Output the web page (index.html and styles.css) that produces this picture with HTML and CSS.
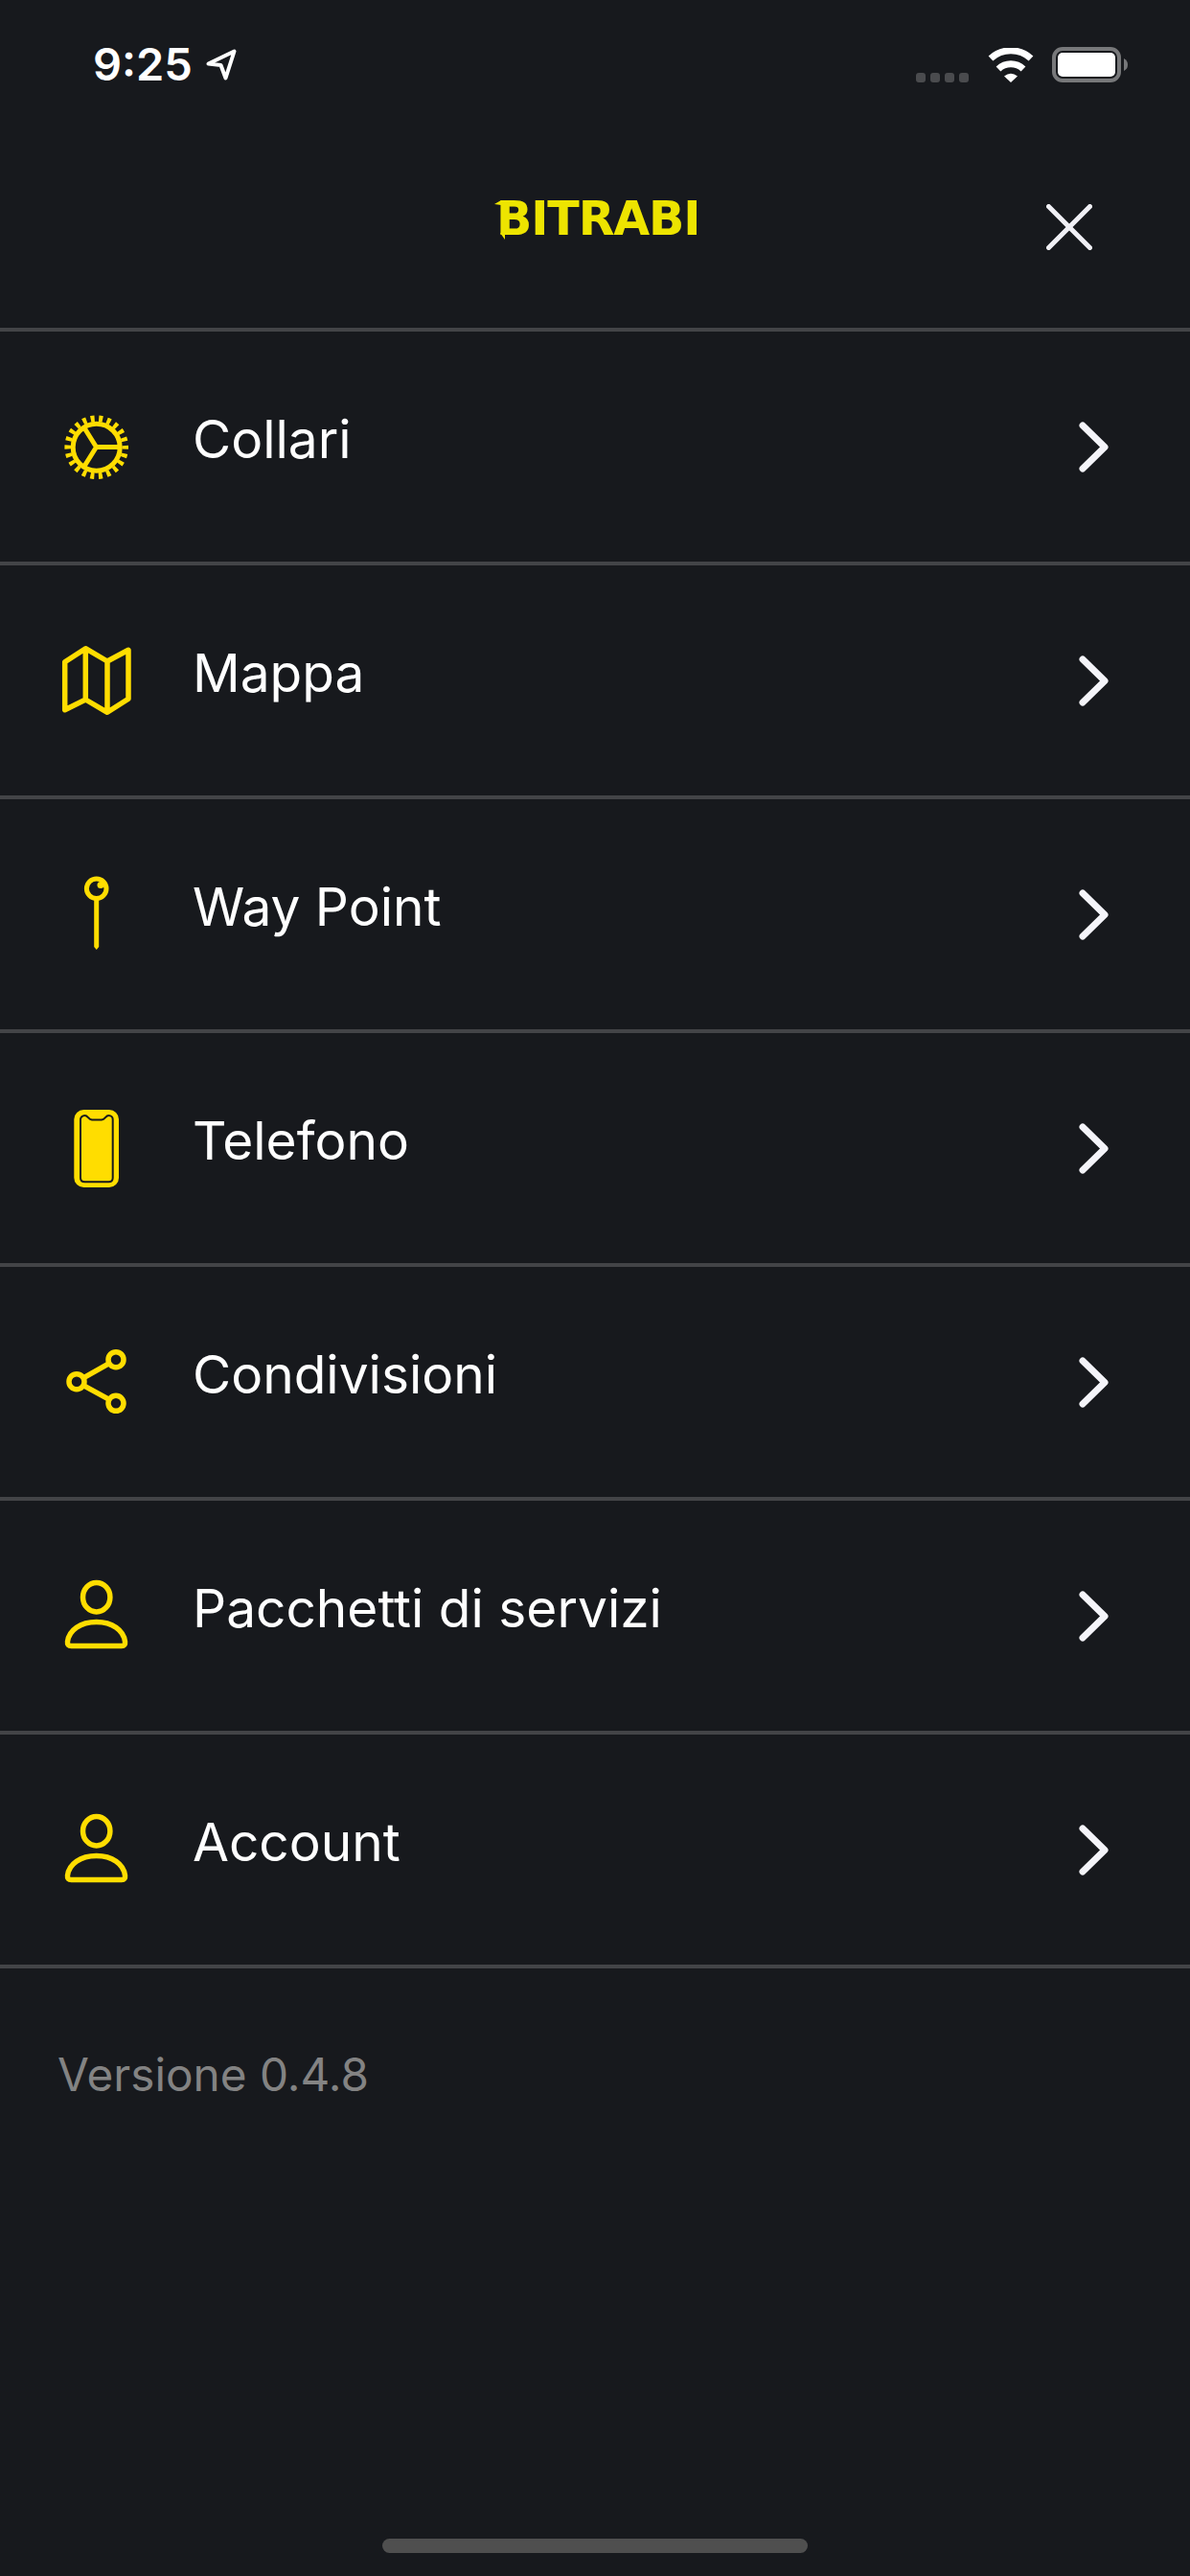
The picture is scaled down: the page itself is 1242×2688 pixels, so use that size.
FILE: index.html
```html
<!DOCTYPE html>
<html lang="it">
<head>
<meta charset="utf-8">
<title>Bitrabi</title>
<link rel="stylesheet" href="styles.css">
</head>
<body>
<div class="page">
  <div class="status">
    <div class="status-left">
      <span class="time">9:25</span>
      <svg class="loc" width="32" height="33" viewBox="0 0 32 33"><path d="M2.5 15.5 L29.5 2.5 L20.5 30.5 L15.5 17 Z" fill="none" stroke="#fff" stroke-width="4" stroke-linejoin="round"/></svg>
    </div>
    <div class="status-right">
      <svg class="dots" width="55" height="10" viewBox="0 0 55 10"><rect x="0" width="10" height="10" rx="3"/><rect x="15" width="10" height="10" rx="3"/><rect x="30" width="10" height="10" rx="3"/><rect x="45" width="10" height="10" rx="3"/></svg>
      <svg class="wifi" width="48" height="36" viewBox="0 0 48 36"><path d="M3 11 A31 31 0 0 1 45 11" fill="none" stroke="#fff" stroke-width="7"/><path d="M11 22 A19 19 0 0 1 37 22" fill="none" stroke="#fff" stroke-width="7"/><path d="M17 29.5 Q24 24 31 29.5 L24 36 Z" fill="#fff"/></svg>
      <svg class="battery" width="80" height="37" viewBox="0 0 80 37"><rect x="2" y="2" width="68" height="33" rx="9" fill="none" stroke="#77787a" stroke-width="4"/><rect x="6" y="6" width="60" height="25" rx="5" fill="#fff"/><path d="M75 12 Q79 14 79 18.500 Q79 23 75 25 Z" fill="#77787a"/></svg>
    </div>
  </div>
  <header class="header">
    <div class="logo">
      <span class="logo-text">BITRABI</span>
      <svg class="logo-mark" width="14" height="41" viewBox="0 0 14 41"><path d="M0 4 L7 0 H14 V13 H10 L7 5 Z M6 34 H11 V41 Z" fill="#ede400"/></svg>
    </div>
    <svg class="close" width="48" height="48" viewBox="0 0 48 48"><path d="M2.500 2.500 L45.500 45.500 M45.500 2.500 L2.500 45.500" stroke="#f0f0f5" stroke-width="5" stroke-linecap="round"/></svg>
  </header>
  <nav class="menu">
    <a class="row">
      <svg class="icon" width="100" height="100" viewBox="0 0 100 100" fill="none" stroke="#ffdd00">
        <circle cx="50.700" cy="50.700" r="24.500" stroke-width="5"/>
        <circle cx="50.700" cy="50.700" r="30" stroke-width="6.600" stroke-dasharray="4 4.568" stroke-dashoffset="2"/>
        <path d="M50.500 50.500 H75 M50.500 50.500 L38 30.500 M50.500 50.500 L38 70.500" stroke-width="5"/>
      </svg>
      <span class="label">Collari</span>
      <svg class="chev" width="31" height="53" viewBox="0 0 31 53"><path d="M4 4 L27 26.500 L4 49" fill="none" stroke="#f4f4f9" stroke-width="7" stroke-linecap="round" stroke-linejoin="round"/></svg>
    </a>
    <a class="row">
      <svg class="icon" width="100" height="100" viewBox="0 0 100 100" fill="none" stroke="#ffdd00" stroke-width="5.500" stroke-linejoin="round">
        <path d="M17.700 30.700 L39.300 16.700 L62 30 L84 18.300 V69.300 L62 83.300 L39.300 70 L17.700 80.700 Z M39.300 16.700 V70 M62 30 V83.300"/>
      </svg>
      <span class="label">Mappa</span>
      <svg class="chev" width="31" height="53" viewBox="0 0 31 53"><path d="M4 4 L27 26.500 L4 49" fill="none" stroke="#f4f4f9" stroke-width="7" stroke-linecap="round" stroke-linejoin="round"/></svg>
    </a>
    <a class="row">
      <svg class="icon" width="100" height="100" viewBox="0 0 100 100">
        <circle cx="50.700" cy="23.300" r="10.300" fill="none" stroke="#ffdd00" stroke-width="5"/>
        <circle cx="55" cy="19.500" r="3.500" fill="#ffdd00"/>
        <path d="M48.200 34 H53.200 V84 L50.700 87 L48.200 84 Z" fill="#ffdd00"/>
      </svg>
      <span class="label">Way Point</span>
      <svg class="chev" width="31" height="53" viewBox="0 0 31 53"><path d="M4 4 L27 26.500 L4 49" fill="none" stroke="#f4f4f9" stroke-width="7" stroke-linecap="round" stroke-linejoin="round"/></svg>
    </a>
    <a class="row">
      <svg class="icon" width="100" height="100" viewBox="0 0 100 100">
        <rect x="27.300" y="10" width="46.700" height="81" rx="10" fill="#ffdd00"/>
        <path d="M38.500 16 C42 16 42 20 46 20.500 H56 C60 20 60 16 63.500 16 C66 16 67.700 18 67.700 20 V81 C67.700 84 66 85.300 63.500 85.300 H38.500 C36 85.300 34 84 34 81 V20 C34 18 36 16 38.500 16 Z" fill="none" stroke="#17191d" stroke-width="2"/>
      </svg>
      <span class="label">Telefono</span>
      <svg class="chev" width="31" height="53" viewBox="0 0 31 53"><path d="M4 4 L27 26.500 L4 49" fill="none" stroke="#f4f4f9" stroke-width="7" stroke-linecap="round" stroke-linejoin="round"/></svg>
    </a>
    <a class="row">
      <svg class="icon" width="100" height="100" viewBox="0 0 100 100" fill="none" stroke="#ffdd00" stroke-width="5.500">
        <circle cx="71" cy="26.700" r="8"/>
        <circle cx="30" cy="49.700" r="8"/>
        <circle cx="71" cy="72.300" r="8"/>
        <path d="M37 45.800 L64 30.600 M37 53.600 L64 68.400"/>
      </svg>
      <span class="label">Condivisioni</span>
      <svg class="chev" width="31" height="53" viewBox="0 0 31 53"><path d="M4 4 L27 26.500 L4 49" fill="none" stroke="#f4f4f9" stroke-width="7" stroke-linecap="round" stroke-linejoin="round"/></svg>
    </a>
    <a class="row">
      <svg class="icon" width="100" height="100" viewBox="0 0 100 100" fill="none" stroke="#ffdd00" stroke-width="5.500">
        <ellipse cx="50.700" cy="30.700" rx="14.200" ry="15.200"/>
        <path d="M20.500 77 C22 65 34 56.500 50.700 56.500 C67 56.500 79 65 80.500 77 Q81 81.500 77 81.500 H24.500 Q20 81.500 20.500 77 Z"/>
      </svg>
      <span class="label">Pacchetti di servizi</span>
      <svg class="chev" width="31" height="53" viewBox="0 0 31 53"><path d="M4 4 L27 26.500 L4 49" fill="none" stroke="#f4f4f9" stroke-width="7" stroke-linecap="round" stroke-linejoin="round"/></svg>
    </a>
    <a class="row">
      <svg class="icon" width="100" height="100" viewBox="0 0 100 100" fill="none" stroke="#ffdd00" stroke-width="5.500">
        <ellipse cx="50.700" cy="30.700" rx="14.200" ry="15.200"/>
        <path d="M20.500 77 C22 65 34 56.500 50.700 56.500 C67 56.500 79 65 80.500 77 Q81 81.500 77 81.500 H24.500 Q20 81.500 20.500 77 Z"/>
      </svg>
      <span class="label">Account</span>
      <svg class="chev" width="31" height="53" viewBox="0 0 31 53"><path d="M4 4 L27 26.500 L4 49" fill="none" stroke="#f4f4f9" stroke-width="7" stroke-linecap="round" stroke-linejoin="round"/></svg>
    </a>
  </nav>
  <p class="version">Versione 0.4.8</p>
  <div class="home-bar"></div>
</div>
</body>
</html>
```

FILE: styles.css
```css
* { box-sizing: border-box; }
html, body { margin: 0; padding: 0; }
body {
  background: #17191d;
  color: #fff;
  font-family: Inter, "Liberation Sans", sans-serif;
}
.page {
  display: flex;
  flex-direction: column;
  height: 2688px;
  overflow: hidden;
}
.status {
  display: flex;
  justify-content: space-between;
  align-items: flex-start;
  height: 96px;
  padding: 45px 64px 0 97px;
}
.status-left {
  display: flex;
  align-items: flex-start;
  gap: 14px;
}
.time {
  font-size: 47px;
  line-height: 44px;
  font-weight: 600;
}
.loc { margin-top: 6px; }
.status-right {
  display: flex;
  align-items: flex-end;
  padding-top: 4px;
}
.dots { fill: #4a4b4e; margin-right: 20px; }
.wifi { margin-right: 19px; }
.header {
  display: flex;
  justify-content: center;
  align-items: flex-start;
  position: relative;
  height: 250px;
  border-bottom: 4px solid #434447;
  padding-top: 113px;
}
.logo {
  position: relative;
  height: 36px;
  width: 211px;
  display: flex;
  justify-content: flex-end;
  align-items: center;
}
.logo-text {
  margin-right: -4px;
  padding-top: 3px;
  font-family: "DejaVu Sans", sans-serif;
  font-weight: 700;
  font-size: 49px;
  line-height: 36px;
  letter-spacing: -1.100px;
  color: #ede400;
  white-space: nowrap;
}
.logo-mark {
  position: absolute;
  left: 0;
  top: 0;
}
.close {
  position: absolute;
  right: 102px;
  top: 117px;
}
.menu {
  display: flex;
  flex-direction: column;
}
.row {
  display: flex;
  align-items: center;
  height: 244px;
  padding: 0 85px 0 50px;
  border-bottom: 4px solid #434447;
}
.icon { flex: none; }
.label {
  flex: 1;
  margin-left: 51px;
  padding-bottom: 16px;
  font-size: 55px;
  line-height: 64px;
  color: #fff;
}
.chev { flex: none; }
.version {
  margin: 82px 0 0 60px;
  font-size: 47.700px;
  line-height: 58px;
  color: #838383;
}
.home-bar {
  width: 444px;
  height: 15px;
  margin: auto auto 24px;
  border-radius: 8px;
  background: #4f4f4f;
}
```
